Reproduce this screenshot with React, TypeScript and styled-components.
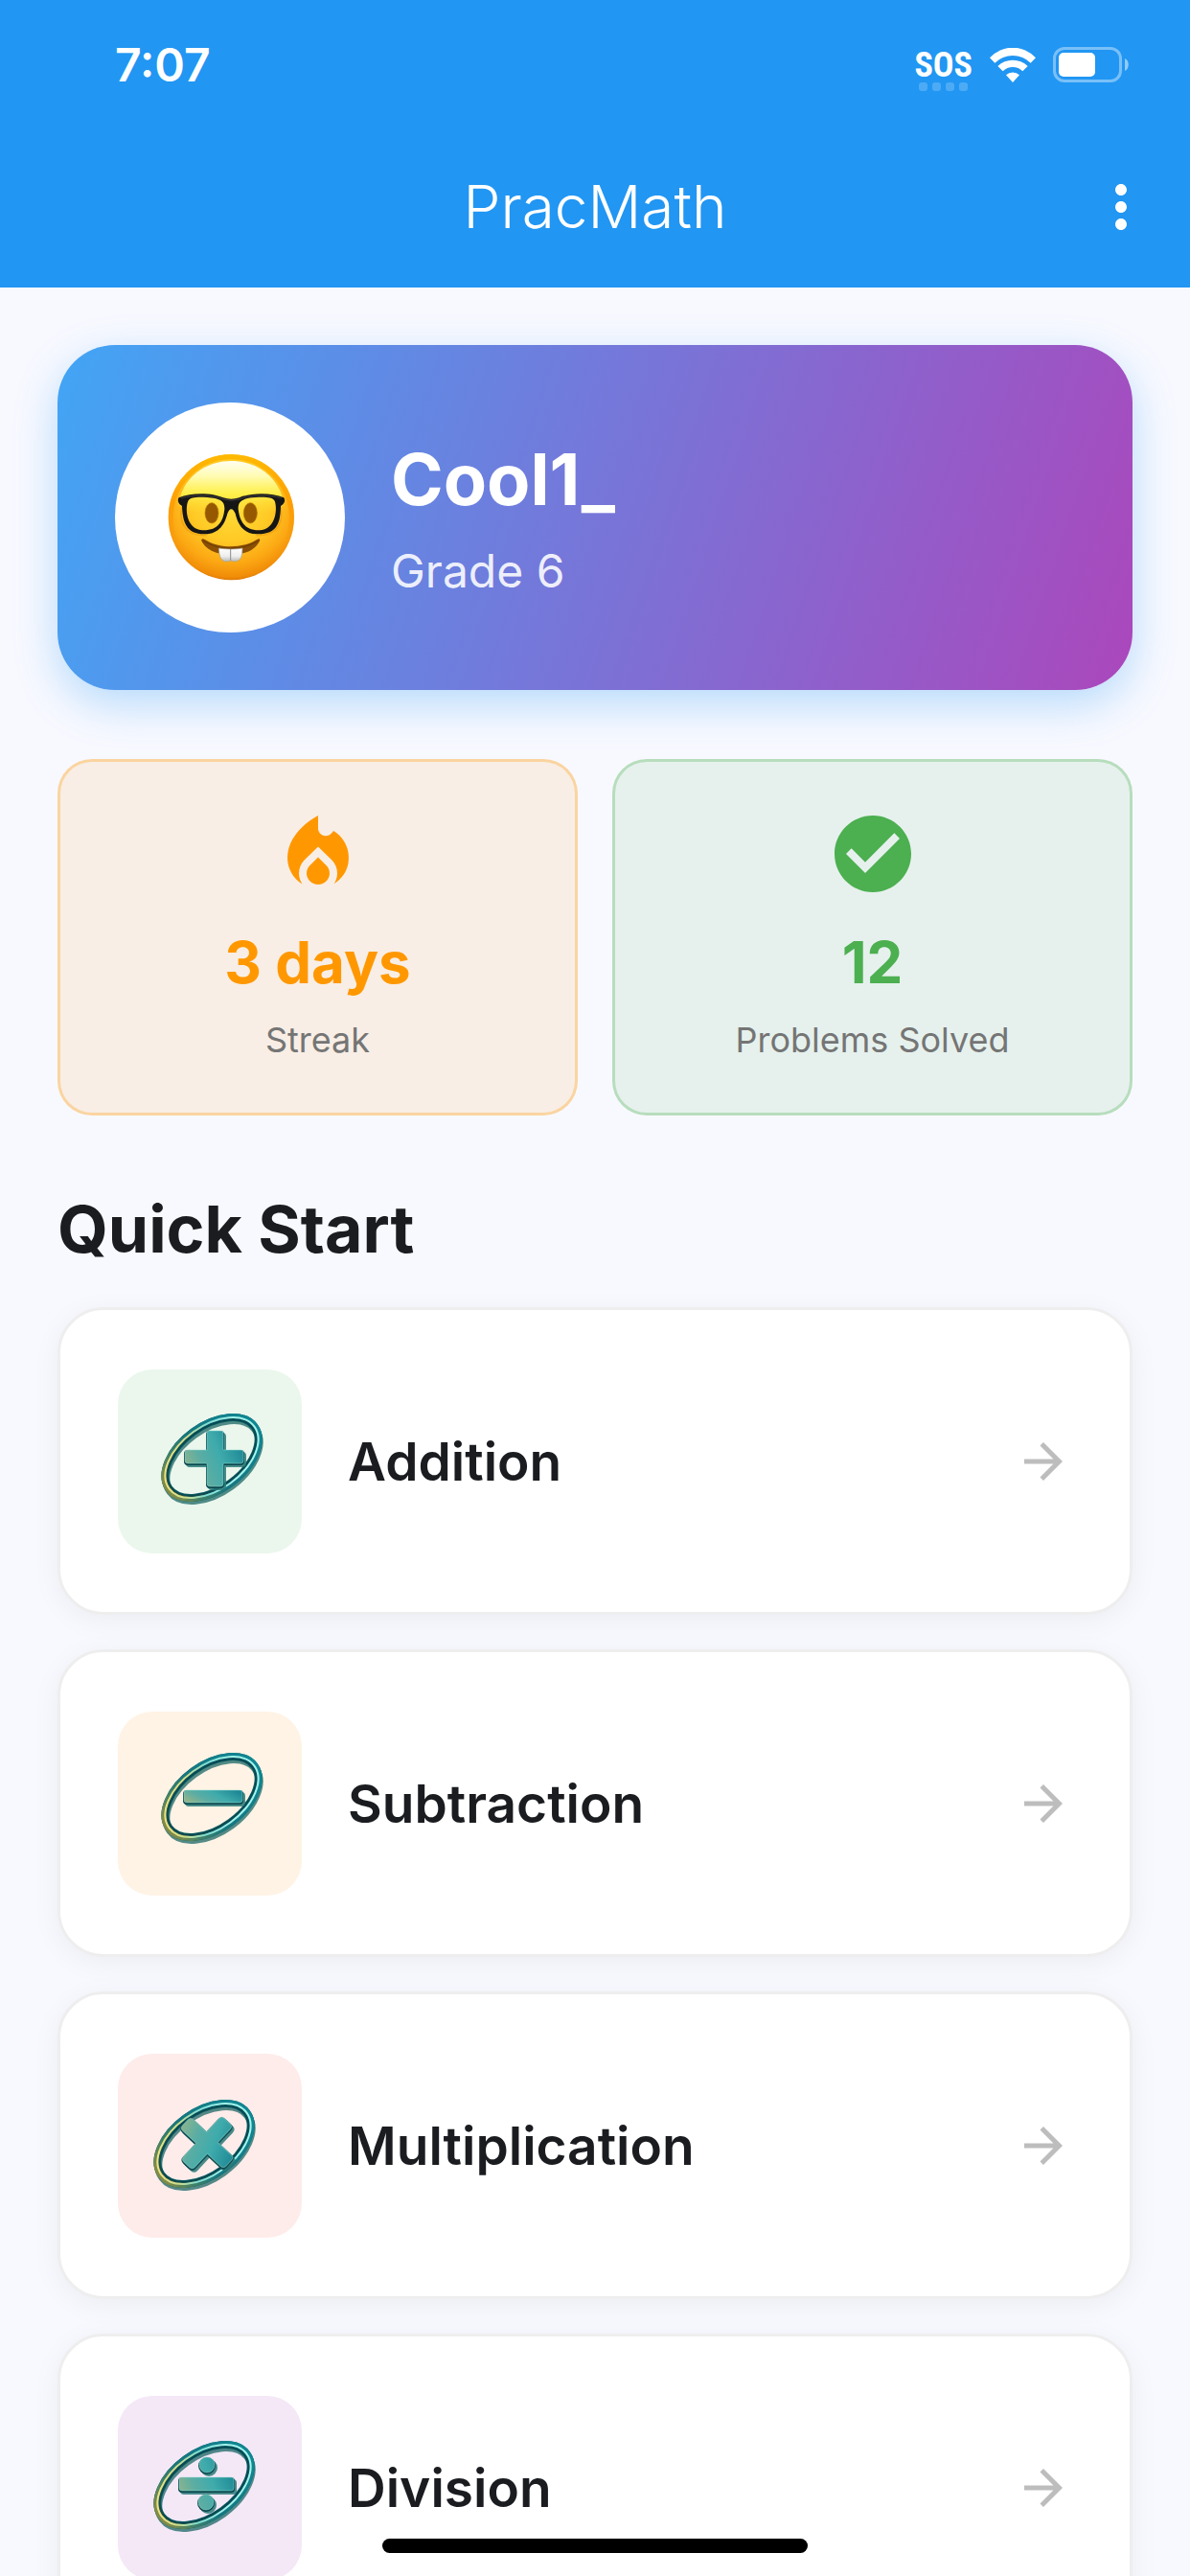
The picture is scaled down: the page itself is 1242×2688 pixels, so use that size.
import React from 'react';
import styled, {createGlobalStyle} from 'styled-components';
import {MdArrowForward, MdCheckCircle, MdLocalFireDepartment, MdMoreVert} from 'react-icons/md';

type Operation = 'addition' | 'subtraction' | 'multiplication' | 'division';

interface IQuickStart {
  operation: Operation;
  title: string;
  tint: string;
}

const quickStarts: IQuickStart[] = [
  {operation: 'addition', title: 'Addition', tint: '#ebf7ed'},
  {operation: 'subtraction', title: 'Subtraction', tint: '#fff3e5'},
  {operation: 'multiplication', title: 'Multiplication', tint: '#feecea'},
  {operation: 'division', title: 'Division', tint: '#f4e8f7'},
];

const App = () => {
  return (
    <Screen>
      <GlobalStyle/>
      <Header>
        <StatusBar/>
        <AppBar>
          <AppTitle>PracMath</AppTitle>
          <MenuButton type="button" aria-label="Menu"><MdMoreVert/></MenuButton>
        </AppBar>
      </Header>
      <Content>
        <ProfileCard>
          <Avatar><NerdFace/></Avatar>
          <ProfileText>
            <UserName>Cool1_</UserName>
            <Grade>Grade 6</Grade>
          </ProfileText>
        </ProfileCard>
        <Stats>
          <Stat rgb="255, 152, 0">
            <MdLocalFireDepartment/>
            <StatValue>3 days</StatValue>
            <StatLabel>Streak</StatLabel>
          </Stat>
          <Stat rgb="76, 175, 80">
            <MdCheckCircle/>
            <StatValue>12</StatValue>
            <StatLabel>Problems Solved</StatLabel>
          </Stat>
        </Stats>
        <SectionTitle>Quick Start</SectionTitle>
        <List>
          {quickStarts.map(({operation, title, tint}) => (
            <li key={operation}>
              <Row href={`#${operation}`}>
                <Tile tint={tint}><OperationIcon operation={operation}/></Tile>
                <RowTitle>{title}</RowTitle>
                <MdArrowForward/>
              </Row>
            </li>
          ))}
        </List>
      </Content>
      <HomeIndicator/>
    </Screen>
  );
};

export default App;

const StatusBar = () => (
  <StyledStatus>
    <Clock>7:07</Clock>
    <StatusIcons>
      <Sos>
        <span>SOS</span>
        <SignalDots><i/><i/><i/><i/></SignalDots>
      </Sos>
      <svg width="48" height="36" viewBox="0 0 144 108" fill="#fff">
        <path d="M0 31A97 97 0 0 1 144 31L128 47A80 80 0 0 0 16 47Z"/>
        <path d="M25 57A68 68 0 0 1 119 57L103 73A44 44 0 0 0 41 73Z"/>
        <path d="M51 85A30 30 0 0 1 93 85L72 108Z"/>
      </svg>
      <svg width="80" height="38" viewBox="0 0 80 38">
        <rect x="1.5" y="1.5" width="69" height="34" rx="10.5" fill="none" stroke="#fff" strokeOpacity="0.4" strokeWidth="3"/>
        <rect x="6" y="6" width="38" height="25" rx="5" fill="#fff"/>
        <path d="M75 12C80 14 80 23 75 25Z" fill="#fff" fillOpacity="0.5"/>
      </svg>
    </StatusIcons>
  </StyledStatus>
);

const NerdFace = () => (
  <svg width="180" height="180" viewBox="0 0 540 540" role="img" aria-label="Nerd face">
    <defs>
      <radialGradient id="skin" cx="0.5" cy="0.36" r="0.66">
        <stop offset="0" stopColor="#ffe13c"/>
        <stop offset="0.5" stopColor="#ffc925"/>
        <stop offset="0.76" stopColor="#fca914"/>
        <stop offset="0.93" stopColor="#f18d08"/>
        <stop offset="1" stopColor="#d06c06"/>
      </radialGradient>
      <linearGradient id="edge" x1="0" y1="0" x2="0" y2="1">
        <stop offset="0" stopColor="#ffb800"/>
        <stop offset="0.4" stopColor="#ff9a00" stopOpacity="0.8"/>
        <stop offset="0.7" stopColor="#f08c00" stopOpacity="0"/>
      </linearGradient>
      <linearGradient id="shine" x1="0" y1="0" x2="0" y2="1">
        <stop offset="0" stopColor="#fffef0"/>
        <stop offset="0.3" stopColor="#fffbb0"/>
        <stop offset="0.62" stopColor="#fff552" stopOpacity="0.85"/>
        <stop offset="1" stopColor="#ffe033" stopOpacity="0"/>
      </linearGradient>
      <linearGradient id="teeth" x1="0" y1="0" x2="0" y2="1">
        <stop offset="0" stopColor="#fff"/>
        <stop offset="0.6" stopColor="#ededed"/>
        <stop offset="1" stopColor="#b9b9b9"/>
      </linearGradient>
    </defs>
    <circle cx="274" cy="269" r="197" fill="url(#skin)"/>
    <circle cx="274" cy="269" r="189" fill="none" stroke="url(#edge)" strokeWidth="15"/>
    <path d="M274 93C365 93 430 155 440 232C400 262 345 256 274 256S150 262 108 232C118 155 184 93 274 93Z" fill="url(#shine)"/>
    <g fill="#965900" stroke="#b77500" strokeWidth="2">
      <ellipse cx="213" cy="256" rx="21" ry="32"/>
      <ellipse cx="334" cy="256" rx="21" ry="32"/>
    </g>
    <path d="M128 218C100 278 128 330 196 326M420 218C448 278 420 330 352 326" fill="none" stroke="#e08c08" strokeOpacity="0.4" strokeWidth="5"/>
    <path
      fill="#161616"
      fillRule="evenodd"
      d="M110 208C150 190 218 193 249 208Q274 216 299 208C330 193 398 190 439 208Q445 219 436 229L429 234C428 286 419 323 355 322C309 321 294 288 287 258Q281 244 274 244T262 258C254 289 238 321 192 322C134 323 122 286 120 234L112 228Q104 217 110 208ZM139 218C129 240 132 306 184 310C231 312 249 284 253 244C254 217 238 210 199 207C170 205 145 206 139 218ZM296 244C301 284 318 312 364 310C415 306 419 240 410 218C404 206 379 205 350 207C310 210 295 217 296 244Z"
    />
    <path d="M118 209C158 197 219 199 249 213Q274 220 299 213C330 199 391 197 431 209" fill="none" stroke="#555" strokeOpacity="0.7" strokeWidth="3"/>
    <path d="M180 341C184 333 190 337 198 343C240 367 305 367 348 343C356 337 363 333 364 341C352 369 322 386 273 386S192 369 180 341Z" fill="#8a4f05"/>
    <path d="M184 342C240 375 305 375 361 342" fill="none" stroke="#5c3000" strokeOpacity="0.5" strokeWidth="4"/>
    <path d="M235 366C258 370 290 370 309 366Q310 404 290 407Q277 409 272 404Q266 410 252 407Q236 402 235 366Z" fill="url(#teeth)" stroke="#aaa38f" strokeWidth="2"/>
    <path d="M272 369V404" stroke="#8d8d8d" strokeWidth="3"/>
  </svg>
);

// リングの中心は演算ごとに少し違う
const ringCenters: Record<Operation, [number, number]> = {
  addition: [98, 92],
  subtraction: [98, 89],
  multiplication: [90, 94],
  division: [90, 93],
};

const OperationShape = ({operation}: { operation: Operation }) => {
  switch (operation) {
    case 'addition':
      return <path d="M96 64H107Q110 64 110 67V84H128Q131 84 131 87V95Q131 98 128 98H110V119Q110 122 107 122H96Q93 122 93 119V98H73Q70 98 70 95V87Q70 84 73 84H93V67Q93 64 96 64Z"/>;
    case 'subtraction':
      return <rect x="69" y="82" width="61" height="13" rx="3"/>;
    case 'multiplication':
      return <path transform="translate(93 93) rotate(43)" d="M-4 -31H4Q8 -31 8 -27V-8H27Q31 -8 31 -4V4Q31 8 27 8H8V27Q8 31 4 31H-4Q-8 31 -8 27V8H-27Q-31 8 -31 4V-4Q-31 -8 -27 -8H-8V-27Q-8 -31 -4 -31Z"/>;
    case 'division':
      return <path d="M67 85H118Q121 85 121 88V96Q121 99 118 99H67Q64 99 64 96V88Q64 85 67 85ZM85 72a8 8 0 1 0 16 0a8 8 0 1 0-16 0ZM84 111a8 8 0 1 0 16 0a8 8 0 1 0-16 0Z"/>;
  }
};

const OperationIcon = ({operation}: { operation: Operation }) => {
  const [cx, cy] = ringCenters[operation];
  const tube = `${operation}-tube`;
  const glow = `${operation}-glow`;
  const face = `${operation}-face`;

  return (
    <svg width="192" height="192" viewBox="0 0 192 192" aria-hidden="true">
      <defs>
        <linearGradient id={tube} x1="0" y1="0" x2="1" y2="0">
          <stop offset="0" stopColor="#7f8c48"/>
          <stop offset="0.2" stopColor="#3f8068"/>
          <stop offset="0.45" stopColor="#157680"/>
          <stop offset="1" stopColor="#0f8793"/>
        </linearGradient>
        <linearGradient id={glow} gradientUnits="userSpaceOnUse" x1="-50" y1="-16" x2="10" y2="28">
          <stop offset="0" stopColor="#f0e280"/>
          <stop offset="0.3" stopColor="#cfdc8a"/>
          <stop offset="0.6" stopColor="#7edcd5"/>
          <stop offset="1" stopColor="#a5f3ec"/>
        </linearGradient>
        <linearGradient id={face} x1="0" y1="0.7" x2="1" y2="0.3">
          <stop offset="0" stopColor="#8fb48c"/>
          <stop offset="0.3" stopColor="#5bada3"/>
          <stop offset="0.6" stopColor="#3fabac"/>
          <stop offset="1" stopColor="#1c8794"/>
        </linearGradient>
      </defs>
      {/* 影 → 縁 → 本体 → ハイライトの順に重ねる */}
      <g transform={`translate(${cx + 1} ${cy + 3}) rotate(-36)`}>
        <ellipse rx="55" ry="33" fill="none" stroke="#1b6764" strokeOpacity="0.75" strokeWidth="8"/>
      </g>
      <g transform={`translate(${cx} ${cy}) rotate(-36)`} fill="none">
        <ellipse rx="55" ry="33" stroke="#0c5a62" strokeWidth="8"/>
        <ellipse rx="56" ry="34" stroke={`url(#${tube})`} strokeWidth="6"/>
        <ellipse rx="53" ry="31" stroke="#063d46" strokeOpacity="0.7" strokeWidth="2"/>
        <ellipse rx="55" ry="33" stroke={`url(#${glow})`} strokeWidth="2"/>
      </g>
      <g transform="translate(2 3)" fill="#2a7a78" stroke="#2a7a78" strokeWidth="2" opacity="0.85">
        <OperationShape operation={operation}/>
      </g>
      <g transform="translate(0 1)" fill="#0a474e" stroke="#0a474e" strokeWidth="2">
        <OperationShape operation={operation}/>
      </g>
      <g fill={`url(#${face})`} stroke="#8fdcd2" strokeOpacity="0.5" strokeWidth="1">
        <OperationShape operation={operation}/>
      </g>
    </svg>
  );
};

const GlobalStyle = createGlobalStyle`
  * {
    box-sizing: border-box;
  }

  body {
    margin: 0;
    background-color: #f8f9ff;
    color: #1a1c20;
    font-family: Inter, Roboto, sans-serif;
  }

  h1, h2, p, ul {
    margin: 0;
    padding: 0;
  }
`;

const Screen = styled.div`
  display: flex;
  flex-direction: column;
  height: 100vh;
  overflow: hidden;
`;

const Header = styled.header`
  flex: none;
  background-color: #2196f3;
  color: #fff;
`;

const StyledStatus = styled.div`
  display: flex;
  align-items: center;
  justify-content: space-between;
  height: 132px;
  padding: 4px 63px 0 120px;
`;

const Clock = styled.span`
  font-size: 48px;
  font-weight: 600;
  line-height: 60px;
`;

const StatusIcons = styled.div`
  display: flex;
  align-items: center;
  gap: 18px;

  svg {
    display: block;
  }
`;

const Sos = styled.div`
  display: flex;
  flex-direction: column;
  align-items: center;
  padding-top: 8px;
  font-family: "Roboto Condensed", Roboto, sans-serif;
  font-size: 36px;
  font-weight: 700;
  line-height: 36px;
`;

const SignalDots = styled.div`
  display: flex;
  gap: 5px;

  i {
    width: 9px;
    height: 9px;
    border-radius: 3px;
    background-color: rgba(255, 255, 255, 0.2);
  }
`;

const AppBar = styled.div`
  display: grid;
  grid-template-columns: 72px 1fr 72px;
  align-items: center;
  height: 168px;
  padding: 0 36px;
`;

const AppTitle = styled.h1`
  grid-column: 2;
  font-size: 62px;
  font-weight: 300;
  line-height: 84px;
  text-align: center;
`;

const MenuButton = styled.button`
  display: flex;
  padding: 0;
  border: none;
  background: none;
  color: inherit;
  font-size: 72px;
`;

const Content = styled.main`
  flex: 1;
  min-height: 0;
  padding: 60px;
  overflow-y: auto;
  scrollbar-width: none;
`;

const ProfileCard = styled.section`
  display: flex;
  align-items: center;
  gap: 48px;
  padding: 60px;
  border-radius: 60px;
  background: linear-gradient(108deg, #42a5f5, #ab47bc);
  box-shadow: 0 15px 45px rgba(33, 150, 243, 0.3);
  color: #fff;
`;

const Avatar = styled.div`
  display: flex;
  align-items: center;
  justify-content: center;
  width: 240px;
  height: 240px;
  border-radius: 50%;
  background-color: #fff;
`;

const ProfileText = styled.div`
  display: flex;
  flex-direction: column;
  gap: 15px;
`;

const UserName = styled.p`
  font-size: 74px;
  font-weight: 700;
  line-height: 96px;
`;

const Grade = styled.p`
  color: rgba(255, 255, 255, 0.9);
  font-size: 48px;
  line-height: 66px;
`;

const Stats = styled.section`
  display: grid;
  grid-template-columns: 1fr 1fr;
  gap: 36px;
  margin-top: 72px;
`;

const Stat = styled.div<{ rgb: string }>`
  display: flex;
  flex-direction: column;
  align-items: center;
  padding: 48px;
  border: 3px solid rgba(${(props) => props.rgb}, 0.3);
  border-radius: 36px;
  background-color: rgba(${(props) => props.rgb}, 0.1);
  color: rgb(${(props) => props.rgb});

  svg {
    font-size: 96px;
  }
`;

const StatValue = styled.p`
  margin: 24px 0 12px;
  font-size: 60px;
  font-weight: 700;
  line-height: 82px;
`;

const StatLabel = styled.p`
  color: #757575;
  font-size: 36px;
  line-height: 56px;
`;

const SectionTitle = styled.h2`
  margin: 72px 0 35px;
  font-size: 68px;
  font-weight: 700;
  line-height: 93px;
`;

const List = styled.ul`
  display: flex;
  flex-direction: column;
  gap: 36px;
  list-style: none;
`;

const Row = styled.a`
  display: flex;
  align-items: center;
  gap: 48px;
  min-height: 321px;
  padding: 60px;
  border: 3px solid #eee;
  border-radius: 48px;
  background-color: #fff;
  box-shadow: 0 6px 30px rgba(0, 0, 0, 0.05);
  color: inherit;
  text-decoration: none;

  > svg {
    flex: none;
    color: #bdbdbd;
    font-size: 60px;
  }
`;

const Tile = styled.div<{ tint: string }>`
  flex: none;
  width: 192px;
  height: 192px;
  border-radius: 36px;
  background-color: ${(props) => props.tint};
`;

const RowTitle = styled.span`
  flex: 1;
  font-size: 55px;
  font-weight: 600;
  line-height: 78px;
`;

const HomeIndicator = styled.div`
  position: fixed;
  bottom: 24px;
  left: 50%;
  width: 444px;
  height: 15px;
  border-radius: 8px;
  background-color: #000;
  transform: translateX(-50%);
`;
